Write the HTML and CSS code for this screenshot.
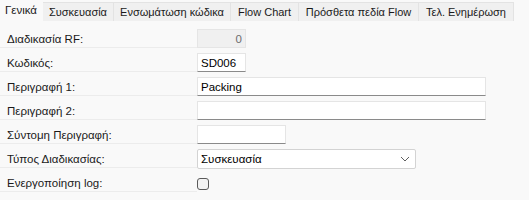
FILE: index.html
```html
<!DOCTYPE html>
<html lang="el">
<head>
  <meta charset="UTF-8">
  <title>Διαδικασία</title>
  <link rel="stylesheet" href="styles.css">
</head>
<body>
  <div class="tabs">
    <div class="tab active tab-general">Γενικά</div>
    <div class="tab tab-packing">Συσκευασία</div>
    <div class="tab tab-code">Ενσωμάτωση κώδικα</div>
    <div class="tab tab-flow">Flow Chart</div>
    <div class="tab tab-fields">Πρόσθετα πεδία Flow</div>
    <div class="tab tab-update">Τελ. Ενημέρωση</div>
  </div>

  <div class="form">
    <div class="row">
      <div class="label">Διαδικασία RF:</div>
      <input class="field small readonly" type="text" value="0" readonly>
    </div>
    <div class="row">
      <div class="label">Κωδικός:</div>
      <input class="field small" type="text" value="SD006">
    </div>
    <div class="row">
      <div class="label">Περιγραφή 1:</div>
      <input class="field wide" type="text" value="Packing">
    </div>
    <div class="row">
      <div class="label">Περιγραφή 2:</div>
      <input class="field wide" type="text" value="">
    </div>
    <div class="row">
      <div class="label">Σύντομη Περιγραφή:</div>
      <input class="field medium" type="text" value="">
    </div>
    <div class="row">
      <div class="label">Τύπος Διαδικασίας:</div>
      <div class="combo">
        <span>Συσκευασία</span>
        <svg class="chevron" width="10" height="6" viewBox="0 0 10 6">
          <path d="M1 1 L5 5 L9 1" fill="none" stroke="#606060" stroke-width="1"/>
        </svg>
      </div>
    </div>
    <div class="row">
      <div class="label">Ενεργοποίηση log:</div>
      <div class="checkbox"></div>
    </div>
  </div>
</body>
</html>
```

FILE: styles.css
```css
:root {
  --page-bg: #f9f9f9;
  --tab-bg: #f0f0f0;
  --tab-border: #e3e3e3;
  --line-color: #ececec;
  --text-color: #1a1a1a;
}

* {
  box-sizing: border-box;
  margin: 0;
  padding: 0;
}

body {
  font-family: "Liberation Sans", Arial, sans-serif;
  font-size: 11px;
  background-color: var(--page-bg);
  color: var(--text-color);
  width: 529px;
  height: 200px;
  overflow: hidden;
}

/* Tab strip */
.tabs {
  display: flex;
  height: 21px;
  align-items: flex-end;
}

.tab {
  height: 19px;
  display: flex;
  align-items: center;
  justify-content: center;
  background-color: var(--tab-bg);
  border: 1px solid var(--tab-border);
  border-bottom: none;
  border-left: none;
  white-space: nowrap;
  font-size: 11px;
}

.tab.active {
  height: 21px;
  background-color: var(--page-bg);
  border-color: transparent;
  padding-bottom: 2px;
  font-size: 11.5px;
}

.tab-general { width: 43px; }
.tab-packing { width: 71px; }
.tab-code { width: 117px; }
.tab-flow { width: 68px; }
.tab-fields { width: 120px; }
.tab-update { width: 95px; }

/* Form rows */
.form {
  padding-top: 3px;
}

.row {
  display: flex;
  align-items: flex-start;
  height: 24px;
}

.label {
  width: 197px;
  height: 24px;
  padding: 6px 0 0 7px;
  display: flex;
  align-items: center;
  border-bottom: 1px solid var(--line-color);
  font-size: 11.5px;
}

.field {
  margin-top: 5px;
  height: 19px;
  border: 1px solid #e5e5e5;
  border-bottom-color: #8a8a8a;
  background-color: white;
  font-family: inherit;
  font-size: 11.5px;
  color: black;
  padding: 0 3px;
  outline: none;
}

.field.small {
  width: 49px;
}

.field.medium {
  width: 89px;
}

.field.wide {
  width: 289px;
}

.field.readonly {
  background-color: #f0f0f0;
  border-color: #e5e5e5;
  color: #6d6d6d;
  text-align: right;
}

.combo {
  margin-top: 5px;
  width: 219px;
  height: 20px;
  border: 1px solid #d3d3d3;
  border-radius: 2px;
  background-color: white;
  display: flex;
  align-items: center;
  justify-content: space-between;
  padding: 0 5px 0 3px;
  color: black;
  font-size: 11.5px;
}

.checkbox {
  margin-top: 10px;
  width: 12px;
  height: 12px;
  border: 1px solid #5a5a5a;
  border-radius: 3px;
  background-color: #f3f3f3;
}
```
